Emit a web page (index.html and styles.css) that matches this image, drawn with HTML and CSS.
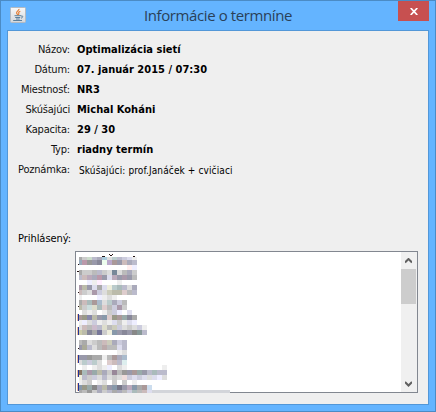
FILE: index.html
```
<!DOCTYPE html>
<html lang="sk">
<head>
<meta charset="utf-8">
<title>Informácie o termníne</title>
<link rel="stylesheet" href="styles.css">
</head>
<body>
<div class="window">
  <header class="titlebar">
    <svg class="app-icon" width="16" height="16" viewBox="0 0 16 16">
      <defs><linearGradient id="g" x1="0" y1="0" x2="0" y2="1"><stop offset="0" stop-color="#f8f8f8"/><stop offset="1" stop-color="#d3d7dc"/></linearGradient></defs>
      <rect x=".5" y=".5" width="15" height="15" rx="1" fill="url(#g)" stroke="#b3bac2"/>
      <path d="M9 1.8C9.3 3.6 6 4.3 6.6 6.1C6.8 6.8 7.5 7.2 7.7 8M10.3 4.3C8.9 4.9 8.2 5.5 8.8 6.4C9.1 7 8.8 7.4 8.3 7.9" fill="none" stroke="#e5813a" stroke-width="1.2"/>
      <path d="M4.5 8.7H11M5.2 10.5H10.2M6 12H9.7M3.2 13.5H12M11 9.1C13.5 8.3 13.2 10.7 11 11.2" fill="none" stroke="#5c7f9b" stroke-width="1"/>
    </svg>
    <h1 class="title">Informácie o termníne</h1>
    <button class="close" aria-label="Zavrieť"><svg width="8" height="7" viewBox="0 0 8 7"><path d="M.7 0L7.3 7M7.3 0L.7 7" stroke="#fff" stroke-width="1.7"/></svg></button>
  </header>
  <main class="client">
    <dl class="details">
      <dt>Názov:</dt><dd>Optimalizácia sietí</dd>
      <dt>Dátum:</dt><dd>07. január 2015 / 07:30</dd>
      <dt>Miestnosť:</dt><dd>NR3</dd>
      <dt>Skúšajúci</dt><dd>Michal Koháni</dd>
      <dt>Kapacita:</dt><dd>29 / 30</dd>
      <dt>Typ:</dt><dd>riadny termín</dd>
      <dt>Poznámka:</dt><dd class="note">Skúšajúci: prof.Janáček + cvičiaci</dd>
    </dl>
    <section class="enrolled">
      <div class="enrolled-label">Prihlásený:</div>
      <div class="list">
        <svg class="names" id="names" width="154" height="142" shape-rendering="crispEdges"></svg>
        <div class="scrollbar">
          <svg class="arrow" width="7" height="6" viewBox="0 0 7 6"><path d="M0 4.5L3.5 1L7 4.5" fill="none" stroke="#606060" stroke-width="2"/></svg>
          <div class="thumb"></div>
          <svg class="arrow down" width="7" height="6" viewBox="0 0 7 6"><path d="M0 1L3.5 4.5L7 1" fill="none" stroke="#606060" stroke-width="2"/></svg>
        </div>
      </div>
    </section>
  </main>
</div>
<script src="names.js"></script>
</body>
</html>
```
FILE: styles.css
```
* { box-sizing: border-box; }
body { margin: 0; font-family: "DejaVu Sans Condensed", "DejaVu Sans", sans-serif; font-size: 11px; color: #000; }
.window { width: 436px; height: 412px; background: #64b4ff; border: 1px solid #4b8bc5; padding: 0 6px 6px; display: flex; flex-direction: column; }
.titlebar { height: 29px; flex: none; display: grid; grid-template-columns: 31px 1fr 31px; align-items: start; }
.app-icon { margin: 6px 0 0 3px; }
.title { margin: 2px 0 0; text-align: center; font: 400 15px/24px "Open Sans", "Noto Sans", sans-serif; letter-spacing: -0.4px; color: #2a4158; white-space: nowrap; }
.close { width: 31px; height: 20px; border: 0; padding: 0; background: #c75050; display: flex; align-items: center; justify-content: center; }
.client { flex: 1; background: #efefef; border: 1px solid #5297d8; display: flex; flex-direction: column; }
.details { margin: 9px 0 0; display: grid; grid-template-columns: 62px 1fr; grid-auto-rows: 20px; column-gap: 7px; line-height: 20px; white-space: nowrap; }
.details dt { text-align: right; color: #111; letter-spacing: -0.2px; }
.details dd { margin: 0; font-weight: bold; letter-spacing: 0.02px; }
.details .note { font-weight: normal; font-size: 10px; padding: 1px 0 0 2px; letter-spacing: 0.12px; }
.enrolled { margin-top: 49px; display: grid; grid-template-columns: 67px 343px; }
.enrolled-label { grid-column: 1; padding-left: 10px; line-height: 20px; letter-spacing: -0.05px; white-space: nowrap; }
.list { grid-column: 2; width: 343px; height: 142px; margin-top: 22px; background: #fff; border: 1px solid #828790; display: flex; justify-content: space-between; }
.names { margin-bottom: -1px; overflow: visible; }
.scrollbar { width: 16px; background: #f0f0f0; display: flex; flex-direction: column; }
.arrow { flex: none; margin: 6px 0 5px 4px; }
.thumb { width: 15px; height: 35px; background: #cdcdcd; }
.down { margin-top: auto; }
```
FILE: names.js
```
// Obscured attendee names: one string per 5px mosaic row, three hex digits per tile.
const rows = [
  "aaa ccc cdc bbc aab acd ddd bcc bbc ccd dde eee",
  "9ab b9a 999 99a 889 efe bac a99 99a cbb aab bbc",
  "fff fff fff fff fff fff fff fff fff fff fee eef",
  "aaa ccc ccc bbb bbc ccc ddd 789 ddd bbb aab ccc",
  "bbc cbb bab aab b9a 99a dde bab 99a a9a 99a bbb",
  "fff fff eef eee fef fff fff fff eee fff fff fff",
  "a9a bba 99a dde aaa dde eed bcc abb bbc ddd aab",
  "cbb ccc ddd a9a ccd ddd ccb bba bba dcc bbb bbc",
  "eee fff fff fff eef eee ddd eee fff fff",
  "aaa cbb abb a99 abc ddd bcc aab ccd bbb",
  "bba ccc cdd ddc abb dcc bbb ccd a9a ccc",
  "fff ddd eee ddd fff eee ccc ccd eef fff dde",
  "a99 998 88a bba 99a 89a dcc 998 a99 9aa 889 aaa",
  "eee eef ddd ccd eee ddd eee dde ccc eee dde eef",
  "ddd cbb bbb cbc bbc ddc bbb ccb ccd ddd ccc ddd ccd eee",
  "cca bba 889 aaa 779 ccc eed 89a 99a 889 99a 888 899 bbc",
  "fff fff fff fff fff fff fff fff fff fff",
  "bbb aaa ddd ccc bbb cbb ccb aab ccd bbc",
  "99a aa9 bbc ddd bbb baa bbb bbb dde bbc",
  "fff fff fff fff fff fff fff fff eee ddd",
  "99a 99a 999 aaa aaa eee bbb a99 aab abc",
  "ddd bcc ccd bcc ddd fff dcc cbb bbc dee",
  "fff eee fff eee ddd eee eef fff ddd eee fff fff fff fff fff fff fff eee",
  "876 abb a9a 9aa bba aab ccc 989 bbb 999 99a a99 9aa 99a bbc abb bbc bbc",
  "eed bbc ccc ccd ddd bbc ddd ccc ddd edd ccd dde ccd dde ddd dde eef ddd",
  "eee ddd ccc fff eee ddd fff ccc fff ccc fff eee fff fff",
  "89a 998 9aa 888 aab bba 99a 89a 778 99a bab 89a aaa a99 cde",
  "aaa bbb 999 ccc aab ccc bbc aaa aab bbb ccd abb bbb cbb dde"
];
const svg = document.getElementById("names");
function tile(x, y, w, h, fill) {
  const r = document.createElementNS("http://www.w3.org/2000/svg", "rect");
  for (const [k, v] of Object.entries({ x, y, width: w, height: h, fill })) r.setAttribute(k, v);
  svg.append(r);
}
tile(3, 138, 151, 3, "#d3d5da");
rows.forEach((row, j) => row.split(" ").forEach((c, i) => {
  const x = i ? 6 + (i - 1) * 5 : 3;
  const y = j ? 8 + (j - 1) * 5 : 5;
  tile(x, y, i ? 5 : 3, j && j < 27 ? 5 : 3, "#" + c);
}));
// Letter edges that remain beside the mosaic.
[[26,4,3],[33,2,1],[34,3,2],[36,2,1],[57,4,2],[2,12,1],[1,19,2],[2,40,1],[2,54,1],[2,96,1]].forEach(([x, y, w]) => tile(x, y, w, 1, "#211"));
[[62,7],[75,8],[103,8],[118,7],[131,8]].forEach(([y, h]) => {
  tile(1, y, 1, h, "#eb9");
  tile(2, y, 1, h, "#239");
});
```
